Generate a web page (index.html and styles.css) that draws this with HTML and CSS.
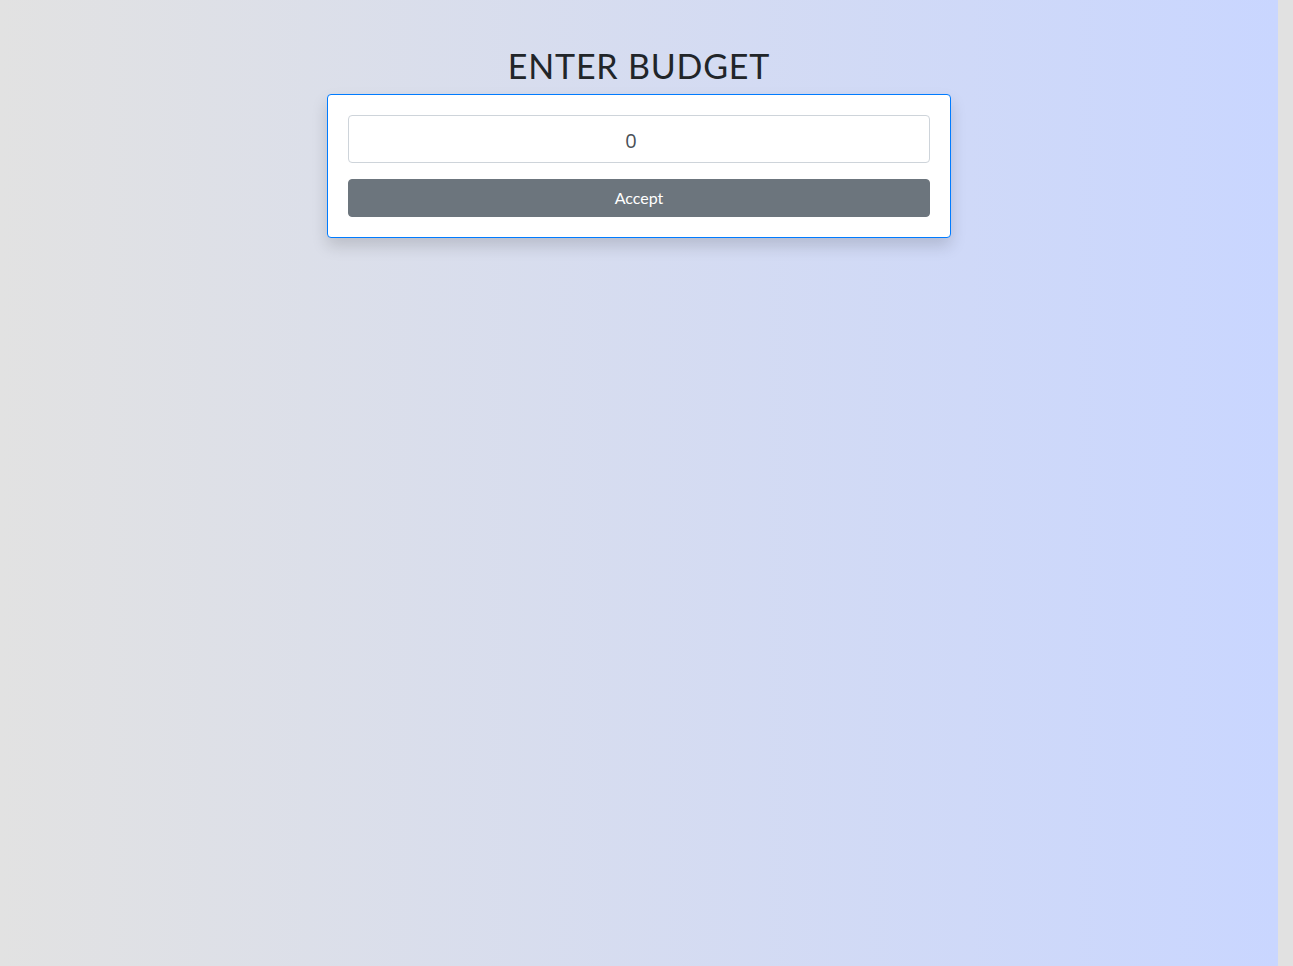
FILE: index.html
```html
<!DOCTYPE html>
<html lang="en">
<head>
<meta charset="utf-8">
<title>Budget</title>
<link rel="stylesheet" href="styles.css">
</head>
<body>
<main class="page">
  <h1 class="title">ENTER BUDGET</h1>
  <form class="card">
    <input class="budget-input" type="text" value="0">
    <button class="accept-btn" type="button">Accept</button>
  </form>
</main>
</body>
</html>
```

FILE: styles.css
```css
html {
  background: #e1e1e1;
  height: 100%;
}
body {
  margin: 0 15px 0 0;
  min-height: 100%;
  height: 100%;
}
.page {
  min-height: 966px;
  background: linear-gradient(to right, #e2e2e2, #c9d6ff);
  display: flex;
  flex-direction: column;
  align-items: center;
  padding-top: 46px;
  box-sizing: border-box;
}
.title {
  margin: 0 0 8px;
  font-family: "Lato", sans-serif;
  font-weight: 400;
  font-size: 34px;
  line-height: 40px;
  letter-spacing: 0.8px;
  color: #212529;
}
.card {
  width: 624px;
  box-sizing: border-box;
  background: #fff;
  border: 1px solid #007bff;
  border-radius: 4px;
  box-shadow: 0 8px 16px rgba(0, 0, 0, 0.15);
  padding: 20px;
  display: flex;
  flex-direction: column;
  gap: 16px;
}
.budget-input {
  height: 48px;
  box-sizing: border-box;
  border: 1px solid #ced4da;
  border-radius: 4px;
  text-align: center;
  font-family: "Open Sans", sans-serif;
  font-size: 20px;
  color: #495057;
  padding: 2px 16px 0 0;
  outline: none;
}
.accept-btn {
  height: 38px;
  border: 1px solid #6c757d;
  border-radius: 4px;
  background: #6c757d;
  color: #fff;
  font-family: "Lato", sans-serif;
  font-size: 16px;
  padding: 0 0 2px;
}
```
